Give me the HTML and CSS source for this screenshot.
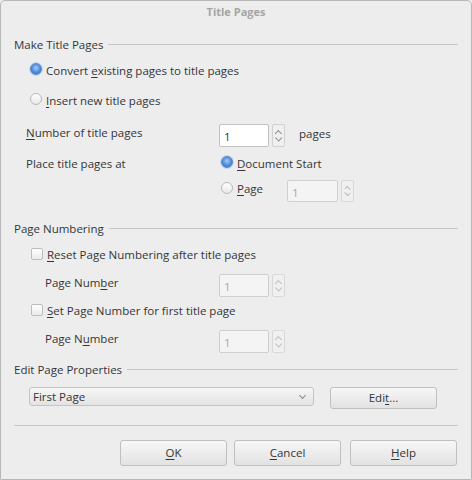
FILE: index.html
```html
<!DOCTYPE html>
<html>
<head>
<meta charset="utf-8">
<link rel="stylesheet" href="styles.css">
</head>
<body>
<div class="window">
  <div class="titlebar">Title Pages</div>
  <div class="content">
    <div class="section-head"><span>Make Title Pages</span><div class="rule"></div></div>

    <div class="row r-radio1 indent1">
      <span class="radio checked"></span><span>Convert <u>e</u>xisting pages to title pages</span>
    </div>
    <div class="row r-radio2 indent1">
      <span class="radio"></span><span><u>I</u>nsert new title pages</span>
    </div>

    <div class="row r-number indent2">
      <span class="label-col"><u>N</u>umber of title pages</span>
      <div class="spin">
        <div class="spin-field">1</div>
        <div class="spin-btns"><span class="chev up"></span><span class="chev down"></span></div>
      </div>
      <span class="unit">pages</span>
    </div>

    <div class="row r-place indent2">
      <span class="label-col">Place title pages at</span>
      <span class="radio checked col-radio"></span><span><u>D</u>ocument Start</span>
    </div>
    <div class="row r-page indent2">
      <span class="label-col"></span>
      <span class="radio col-radio"></span><span class="page-label"><u>P</u>age</span>
      <div class="spin disabled">
        <div class="spin-field">1</div>
        <div class="spin-btns"><span class="chev up"></span><span class="chev down"></span></div>
      </div>
    </div>

    <div class="section-head s2"><span>Page Numbering</span><div class="rule"></div></div>

    <div class="row r-check1 indent1">
      <span class="check"></span><span><u>R</u>eset Page Numbering after title pages</span>
    </div>
    <div class="row r-pnum indent3">
      <span class="label-col2">Page Num<u>b</u>er</span>
      <div class="spin disabled">
        <div class="spin-field">1</div>
        <div class="spin-btns"><span class="chev up"></span><span class="chev down"></span></div>
      </div>
    </div>
    <div class="row r-check2 indent1">
      <span class="check"></span><span><u>S</u>et Page Number for first title page</span>
    </div>
    <div class="row r-pnum indent3">
      <span class="label-col2">Page N<u>u</u>mber</span>
      <div class="spin disabled">
        <div class="spin-field">1</div>
        <div class="spin-btns"><span class="chev up"></span><span class="chev down"></span></div>
      </div>
    </div>

    <div class="section-head s3"><span>Edit Page Properties</span><div class="rule"></div></div>

    <div class="row r-edit">
      <div class="dropdown"><span>First Page</span><span class="chev down dd-chev"></span></div>
      <div class="btn edit-btn">Edi<u>t</u>...</div>
    </div>

    <div class="separator"></div>

    <div class="row r-buttons">
      <div class="btn dlg-btn"><u>O</u>K</div>
      <div class="btn dlg-btn"><u>C</u>ancel</div>
      <div class="btn dlg-btn"><u>H</u>elp</div>
    </div>
  </div>
</div>
</body>
</html>
```

FILE: styles.css
```css
html, body {
  margin: 0;
  padding: 0;
  background: #ededed;
}
body {
  font-family: "Open Sans", "DejaVu Sans", sans-serif;
  font-size: 11.5px;
  color: #333638;
}
u {
  text-decoration: underline;
  text-underline-offset: 2px;
}
.window {
  width: 472px;
  height: 480px;
  box-sizing: border-box;
  border: 1px solid #b8b8b8;
  border-radius: 5px 5px 0 0;
  background: #ededed;
  overflow: hidden;
}
.titlebar {
  height: 25px;
  line-height: 22px;
  text-align: center;
  font-weight: bold;
  color: #a5a5a5;
  font-size: 11px;
}
.content {
  padding: 0 13px 0 13px;
}
.section-head {
  display: flex;
  align-items: center;
  height: 20px;
  margin-top: 8px;
}
.section-head .rule {
  flex: 1;
  height: 1px;
  background: #c9c9c9;
  margin-left: 5px;
  margin-top: 1px;
}
.section-head.s2 { margin-top: 15px; }
.section-head.s3 { margin-top: 6px; }

.row {
  display: flex;
  align-items: center;
}
.indent1 { padding-left: 16px; }
.indent2 { padding-left: 12px; }
.indent3 { padding-left: 31px; }

.r-radio1 { height: 20px; margin-top: 6px; }
.r-radio2 { height: 20px; margin-top: 10px; }
.r-number { height: 23px; margin-top: 14px; }
.r-place { height: 20px; margin-top: 6px; }
.r-page { height: 23px; margin-top: 7px; align-items: flex-start; }
.r-check1 { height: 20px; margin-top: 6px; }
.r-check2 { height: 20px; margin-top: 3px; }
.r-pnum { height: 23px; margin-top: 10px; }
.r-edit { height: 21px; margin-top: 8px; padding-left: 15px; }
.r-buttons { height: 25px; margin-top: 14px; padding-left: 106px; gap: 7px; }

.label-col {
  width: 193px;
  flex: none;
}
.label-col2 {
  width: 174px;
  flex: none;
}
.r-number .label-col { margin-top: -6px; }
.r-pnum .label-col2 { margin-top: -7px; }
.unit { margin-left: 14px; margin-top: -4px; }

.radio {
  width: 10px;
  height: 10px;
  border-radius: 50%;
  border: 1px solid #b9b9b9;
  background: linear-gradient(#ffffff, #e8e8e8);
  margin-right: 4px;
  flex: none;
  box-sizing: content-box;
  margin-top: -2px;
}
.radio.checked {
  border-color: #5a86c0;
  background: radial-gradient(circle at 50% 40%, #a6caf5 0, #4f8cda 55%, #3d74c0 100%);
  box-shadow: 0 0 0 1px #c6d9f1;
}
.col-radio { margin-left: 2px; }
.r-page .radio { margin-top: 2px; }
.page-label { margin-top: 1px; width: 50px; }

.check {
  width: 10px;
  height: 10px;
  border: 1px solid #bdbdbd;
  border-radius: 2px;
  background: linear-gradient(#ffffff, #ebebeb);
  margin-right: 4px;
  margin-left: 1px;
  flex: none;
  margin-top: -1px;
}

.spin {
  display: flex;
  align-items: stretch;
  height: 23px;
  flex: none;
}
.spin-field {
  width: 50px;
  box-sizing: border-box;
  border: 1px solid #c2c2c2;
  border-radius: 2px;
  background: #ffffff;
  padding-left: 4px;
  display: flex;
  align-items: center;
  font-size: 11.5px;
  padding-top: 2px;
  color: #2e3436;
}
.spin-btns {
  width: 13px;
  margin-left: 3px;
  box-sizing: border-box;
  border: 1px solid #d0d0d0;
  border-radius: 2px;
  background: #f0f0f0;
  display: flex;
  flex-direction: column;
  align-items: center;
  justify-content: space-between;
  padding: 5px 0 4px;
}
.r-page .spin { height: 22px; }
.r-page .spin-field { width: 51px; }
.spin.disabled .spin-field {
  background: #f4f4f4;
  border-color: #d0d0d0;
  color: #a8a8a8;
}
.spin.disabled .spin-btns {
  border-color: #d8d8d8;
}
.chev {
  width: 4px;
  height: 4px;
  border-left: 1px solid #8a8a8a;
  border-top: 1px solid #8a8a8a;
  display: block;
}
.chev.up { transform: rotate(45deg); margin-top: 1px; }
.chev.down { transform: rotate(225deg); margin-bottom: 2px; }
.spin.disabled .chev { border-color: #bdbdbd; }

.dropdown {
  width: 285px;
  height: 19px;
  box-sizing: border-box;
  border: 1px solid #c4c4c4;
  border-radius: 3px;
  background: linear-gradient(#f6f6f6, #e3e3e3);
  display: flex;
  align-items: center;
  justify-content: space-between;
  padding: 0 8px 0 3px;
  align-self: flex-start;
  margin-right: 16px;
}
.dd-chev { border-color: #8a8a8a; margin-bottom: 2px; }

.btn {
  box-sizing: border-box;
  border: 1px solid #c0c0c0;
  border-radius: 3px;
  background: linear-gradient(#f7f7f7, #e2e2e2);
  display: flex;
  align-items: center;
  justify-content: center;
}
.edit-btn {
  width: 107px;
  height: 22px;
}
.separator {
  height: 1px;
  background: #c9c9c9;
  margin-top: 17px;
}
.dlg-btn {
  width: 107px;
  height: 26px;
  flex: none;
}
.dlg-btn:last-child { margin-left: 2px; }
```
